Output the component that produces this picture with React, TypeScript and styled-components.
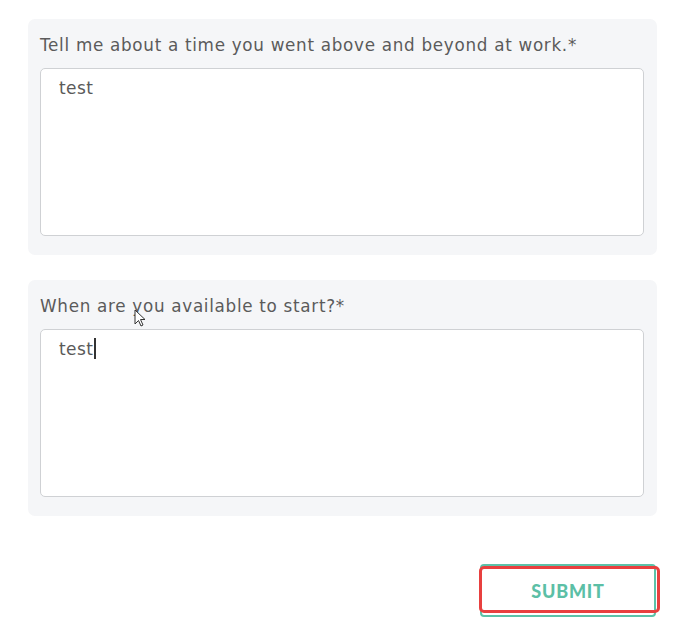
import React from "react";
import styled, { createGlobalStyle } from "styled-components";

const Global = createGlobalStyle`
  html, body { margin: 0; padding: 0; background: #ffffff; }
  body { font-family: "DejaVu Sans", "Noto Sans", sans-serif; }
`;

const Page = styled.div`
  width: 688px;
  height: 631px;
  box-sizing: border-box;
  padding: 19px 31px 0 28px;
  display: flex;
  flex-direction: column;
  gap: 25px;
`;

const Card = styled.section`
  background: #f5f6f8;
  border-radius: 7px;
  padding: 15px 13px 19px 12px;
  display: flex;
  flex-direction: column;
  gap: 12px;
`;

const Label = styled.label`
  font-family: "DejaVu Sans", sans-serif;
  font-size: 16.8px;
  color: #5b5b5b;
  line-height: 22px;
  letter-spacing: 0.7px;
`;

const Area = styled.div`
  height: 168px;
  box-sizing: border-box;
  background: #ffffff;
  border: 1px solid #cfd1d4;
  border-radius: 5px;
  padding: 8px 18px;
  font-family: "DejaVu Sans", sans-serif;
  font-size: 17px;
  color: #5a5a5a;
  line-height: 22px;
  letter-spacing: 0.4px;
`;

const Caret = styled.span`
  display: inline-block;
  width: 1.5px;
  height: 21px;
  background: #333;
  vertical-align: -4px;
  margin-left: 1px;
`;

const Footer = styled.div`
  display: flex;
  justify-content: flex-end;
  padding-top: 23px;
`;

const ButtonWrap = styled.div`
  position: relative;
  margin-right: 1px;
`;

const Button = styled.button`
  width: 176px;
  height: 53px;
  box-sizing: border-box;
  background: #ffffff;
  border: 2px solid #5cc2a8;
  border-radius: 4px;
  color: #5cbfa6;
  font-family: "Lato", sans-serif;
  font-weight: 900;
  font-size: 18px;
  letter-spacing: 0.8px;
  cursor: pointer;
`;

const Highlight = styled.div`
  position: absolute;
  left: -1px;
  top: 2px;
  width: 181px;
  height: 47px;
  box-sizing: border-box;
  border: 3.5px solid #e8403f;
  border-radius: 5px;
  pointer-events: none;
`;

const Cursor = styled.svg`
  position: absolute;
  left: 134px;
  top: 309px;
`;

export default function App() {
  return (
    <>
      <Global />
      <Page>
        <Card>
          <Label>Tell me about a time you went above and beyond at work.*</Label>
          <Area>test</Area>
        </Card>
        <Card>
          <Label>When are you available to start?*</Label>
          <Area>
            test<Caret />
          </Area>
        </Card>
        <Footer>
          <ButtonWrap>
            <Button>SUBMIT</Button>
            <Highlight />
          </ButtonWrap>
        </Footer>
      </Page>
      <Cursor width="14" height="20" viewBox="0 0 14 20">
        <path d="M1 1 L1 15 L4.5 11.5 L7 17 L9 16 L6.5 10.5 L11 10.5 Z" fill="#fff" stroke="#333" strokeWidth="1" strokeLinejoin="round" />
      </Cursor>
    </>
  );
}
